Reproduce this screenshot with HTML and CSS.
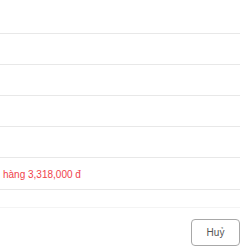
FILE: index.html
```html
<!DOCTYPE html>
<html lang="vi">
<head>
  <meta charset="UTF-8" />
  <meta name="viewport" content="width=device-width, initial-scale=1.0"/>
  <title>Đơn hàng</title>
  <link rel="stylesheet" href="styles.css">
</head>
<body>
  <div class="list">
    <div class="row first"></div>
    <div class="row"></div>
    <div class="row"></div>
    <div class="row"></div>
    <div class="row"></div>
    <div class="row total">hàng 3,318,000 đ</div>
    <div class="row note"></div>
  </div>

  <div class="footer">
    <button class="cancel-btn">Huỷ</button>
  </div>
</body>
</html>
```

FILE: styles.css
```css
body {
  font-family: "Liberation Sans", Arial, sans-serif;
  background: #fff;
  margin: 0;
  padding: 0;
}

.list {
  display: flex;
  flex-direction: column;
}

.row {
  height: 30px;
  border-bottom: 1px solid #e8e8e8;
  display: flex;
  align-items: center;
  padding-left: 3px;
}

.row.first {
  height: 33px;
}

.total {
  color: #f0424a;
  font-size: 10px;
  padding-top: 1px;
}

.note {
  height: 17px;
  border-bottom-color: #f4f4f4;
}

.footer {
  display: flex;
  justify-content: flex-end;
  padding-top: 11px;
}

.cancel-btn {
  width: 49px;
  height: 27px;
  margin-right: 0;
  background: #fff;
  border: 1px solid #a8a8a8;
  border-radius: 4px;
  color: #555;
  font-family: "Liberation Sans", Arial, sans-serif;
  font-size: 10px;
  padding: 0;
}
```
